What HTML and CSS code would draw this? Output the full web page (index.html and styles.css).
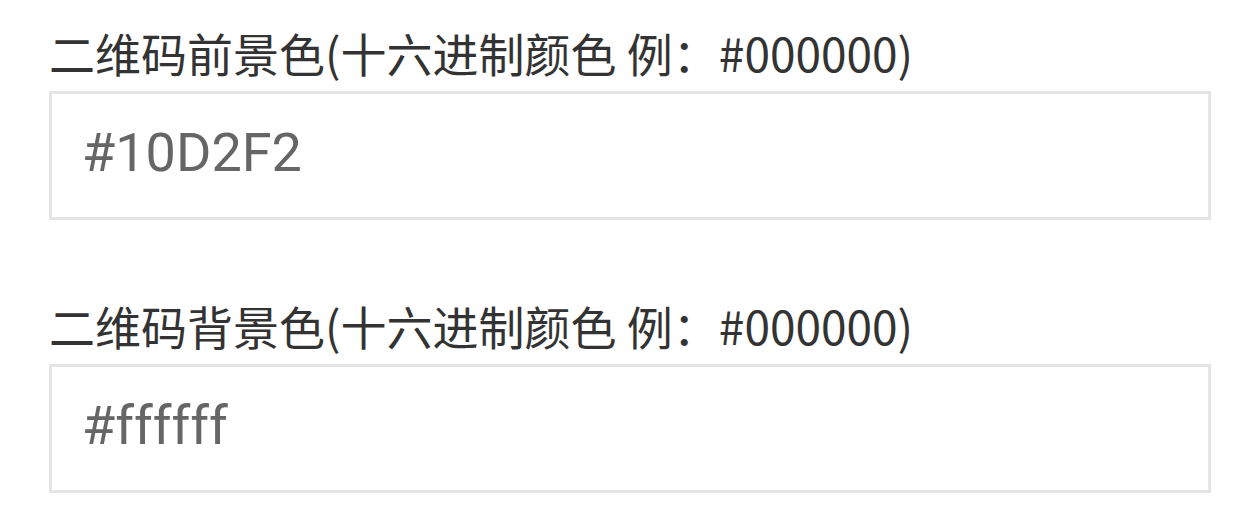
FILE: index.html
```html
<!DOCTYPE html>
<html lang="zh-CN">
<head>
    <meta charset="UTF-8">
    <meta name="viewport" content="width=device-width, user-scalable=no">
    <title>二维码颜色</title>
    <link rel="stylesheet" href="styles.css">
</head>
<body>
    <!-- Colour settings -->
    <div class="form">
        <div class="field">
            <label class="field-label" for="fgColor">二维码前景色(十六进制颜色 例：#000000)</label>
            <input class="field-input" id="fgColor" type="text" value="#10D2F2">
        </div>
        <div class="field">
            <label class="field-label" for="bgColor">二维码背景色(十六进制颜色 例：#000000)</label>
            <input class="field-input" id="bgColor" type="text" value="#ffffff">
        </div>
    </div>
</body>
</html>
```

FILE: styles.css
```css
body {
    margin: 0;
    background: #fff;
    font-family: "Noto Sans CJK SC", "Noto Sans", sans-serif;
}
.form {
    display: flex;
    flex-direction: column;
    gap: 77px;
    padding: 24px 49px 0 49px;
}
.field {
    display: flex;
    flex-direction: column;
}
.field-label {
    font-size: 46px;
    line-height: 56px;
    color: #333;
    margin-bottom: 11px;
}
.field-input {
    box-sizing: border-box;
    width: 100%;
    height: 129px;
    margin: 0;
    padding: 0 30px 6px 30px;
    border: 3px solid #e5e5e5;
    border-radius: 0;
    outline: none;
    background: #fff;
    font-family: Roboto, "Noto Sans", sans-serif;
    font-size: 54px;
    color: #666;
}
```
